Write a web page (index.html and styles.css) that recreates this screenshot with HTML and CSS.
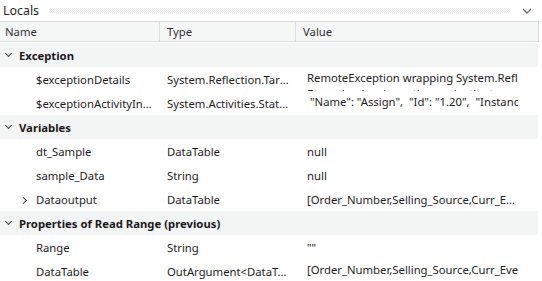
FILE: index.html
```html
<!DOCTYPE html>
<html>
<head>
    <title>Locals</title>
    <meta charset="UTF-8">
    <link rel="stylesheet" href="styles.css">
</head>
<body>
    <div class="panel">
        <div class="titlebar">
            <span class="title">Locals</span>
            <span class="grip"></span>
            <svg class="menu" width="10" height="6" viewBox="0 0 10 6"><path d="M1 1 L5 5 L9 1" fill="none" stroke="#707070" stroke-width="1.3"/></svg>
        </div>

        <div class="grid">
            <div class="row head">
                <div class="cell name">Name</div>
                <div class="cell type">Type</div>
                <div class="cell value">Value</div>
            </div>

            <div class="row group"><span class="caret down"></span>Exception</div>
            <div class="row">
                <div class="cell name">$exceptionDetails</div>
                <div class="cell type">System.Reflection.TargetInvocationException</div>
                <div class="cell value multi">RemoteException wrapping System.Reflection.TargetInvocationException<br>Exception has been thrown by the target</div>
            </div>
            <div class="row">
                <div class="cell name">$exceptionActivityInfo</div>
                <div class="cell type">System.Activities.StateInfo</div>
                <div class="cell value multi">&nbsp;"Name": "Assign",&nbsp; "Id": "1.20",&nbsp; "InstanceId": "12"</div>
            </div>

            <div class="row group"><span class="caret down"></span>Variables</div>
            <div class="row">
                <div class="cell name">dt_Sample</div>
                <div class="cell type">DataTable</div>
                <div class="cell value">null</div>
            </div>
            <div class="row">
                <div class="cell name">sample_Data</div>
                <div class="cell type">String</div>
                <div class="cell value">null</div>
            </div>
            <div class="row">
                <div class="cell name"><span class="caret right"></span>Dataoutput</div>
                <div class="cell type">DataTable</div>
                <div class="cell value">[Order_Number,Selling_Source,Curr_Event_Status]</div>
            </div>

            <div class="row group"><span class="caret down"></span>Properties of Read Range (previous)</div>
            <div class="row">
                <div class="cell name">Range</div>
                <div class="cell type">String</div>
                <div class="cell value">""</div>
            </div>
            <div class="row">
                <div class="cell name">DataTable</div>
                <div class="cell type">OutArgument&lt;DataTable&gt;</div>
                <div class="cell value multi">[Order_Number,Selling_Source,Curr_Event_Status<br>[00000178,US,AMZ,DLG,GSB,SRL,PRS]</div>
            </div>
        </div>
    </div>
</body>
</html>
```

FILE: styles.css
```css
body {
    margin: 0;
    background-color: #fff;
    font-family: 'Noto Sans', sans-serif;
    font-size: 11.3px;
    color: #1e1e1e;
}
.panel {
    width: 542px;
    height: 281px;
    overflow: hidden;
}
.titlebar {
    display: flex;
    align-items: center;
    height: 21px;
    padding: 0 10px 0 3px;
}
.title {
    font-size: 12.4px;
    color: #1e1e1e;
}
.grip {
    flex: 1;
    height: 5px;
    margin: 0 12px 0 10px;
    background-image:
        linear-gradient(45deg, #c8c8c8 25%, transparent 25%, transparent 75%, #c8c8c8 75%),
        linear-gradient(45deg, #c8c8c8 25%, transparent 25%, transparent 75%, #c8c8c8 75%);
    background-size: 2px 2px;
    background-position: 0 0, 1px 1px;
    opacity: 0.5;
}
.menu {
    display: block;
}
.grid {
    width: 539px;
}
.row {
    display: flex;
    align-items: center;
    height: 24px;
}
.cell {
    white-space: nowrap;
    overflow: hidden;
    text-overflow: ellipsis;
}
.cell.name {
    width: 117px;
    padding-left: 36px;
    padding-right: 7px;
    position: relative;
}
.cell.type {
    width: 123px;
    padding-left: 7px;
    padding-right: 6px;
}
.cell.value {
    width: 211px;
    padding-left: 11px;
    padding-right: 21px;
}
.cell.multi {
    text-overflow: clip;
    height: 24px;
    line-height: 16px;
    padding-top: 3px;
    box-sizing: border-box;
    width: 243px;
    border-right: 21px solid #fff;
}
.row.head {
    height: 19px;
    background-color: #f5f6f6;
    border-top: 1px solid #dadcdc;
    border-bottom: 1px solid #dadcdc;
    border-right: 1px solid #dadcdc;
    margin-bottom: 1px;
    color: #333;
}
.row.head .cell {
    height: 19px;
    line-height: 19px;
}
.row.head .name {
    width: 149px;
    padding-left: 5px;
    padding-right: 5px;
    border-right: 1px solid #dadcdc;
}
.row.head .type {
    width: 122px;
    border-right: 1px solid #dadcdc;
}
.row.head .value {
    padding-left: 7px;
}
.row.group {
    background-color: #f3f4f4;
    font-weight: bold;
    color: #1a1a1a;
    padding-left: 19px;
    position: relative;
    width: 519px;
}
.caret {
    position: absolute;
    width: 4px;
    height: 4px;
    border-right: 1.2px solid #444;
    border-bottom: 1.2px solid #444;
}
.caret.down {
    left: 6px;
    top: 8px;
    transform: rotate(45deg);
}
.caret.right {
    left: 21px;
    top: 6px;
    transform: rotate(-45deg);
}
```
